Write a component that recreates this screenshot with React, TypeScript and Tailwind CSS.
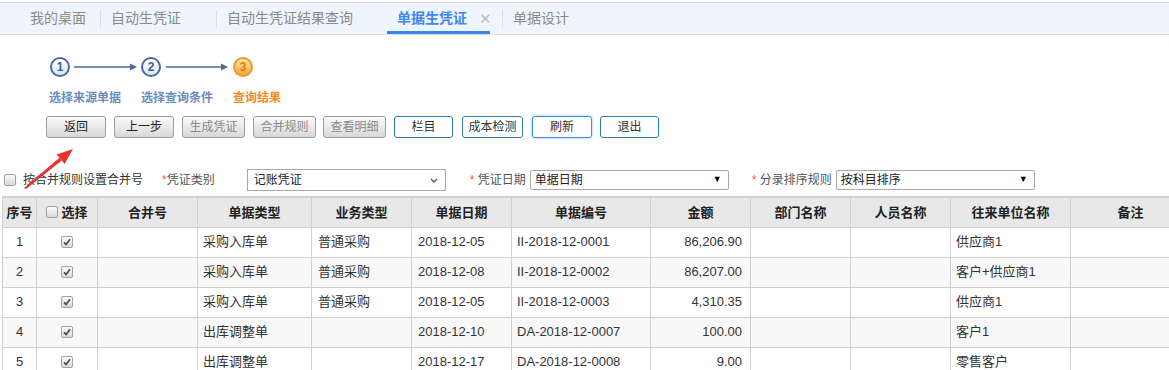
import React from "react";

type Row = {
  no: number;
  billType: string;
  bizType: string;
  date: string;
  code: string;
  amount: string;
  partner: string;
};

const rows: Row[] = [
  { no: 1, billType: "采购入库单", bizType: "普通采购", date: "2018-12-05", code: "II-2018-12-0001", amount: "86,206.90", partner: "供应商1" },
  { no: 2, billType: "采购入库单", bizType: "普通采购", date: "2018-12-08", code: "II-2018-12-0002", amount: "86,207.00", partner: "客户+供应商1" },
  { no: 3, billType: "采购入库单", bizType: "普通采购", date: "2018-12-05", code: "II-2018-12-0003", amount: "4,310.35", partner: "供应商1" },
  { no: 4, billType: "出库调整单", bizType: "", date: "2018-12-10", code: "DA-2018-12-0007", amount: "100.00", partner: "客户1" },
  { no: 5, billType: "出库调整单", bizType: "", date: "2018-12-17", code: "DA-2018-12-0008", amount: "9.00", partner: "零售客户" },
];

const Check = ({ checked }: { checked?: boolean }) => (
  <span className="inline-flex w-[12px] h-[12px] items-center justify-center rounded-[2px] border border-[#a3a3a3] bg-linear-to-b from-[#fafafa] to-[#d9d9d9]">
    {checked && (
      <svg width="8" height="8" viewBox="0 0 8 8">
        <path d="M1 4.3 L3.1 6.4 L7 1.2" fill="none" stroke="#4a4a4a" strokeWidth="1.7" />
      </svg>
    )}
  </span>
);

const StepArrow = ({ w }: { w: number }) => (
  <svg width={w} height="10" viewBox={`0 0 ${w} 10`}>
    <line x1="0" y1="5" x2={w - 6} y2="5" stroke="#4d6a96" strokeWidth="1.5" />
    <path d={`M${w - 7} 1.5 L${w} 5 L${w - 7} 8.5 Z`} fill="#4d6a96" />
  </svg>
);

const GrayBtn = ({ label, className }: { label: string; className: string }) => (
  <button
    className={`h-[22px] rounded-[3px] border border-[#9d9d9d] bg-linear-to-b from-[#fbfbfb] to-[#d8d8d8] text-[12px] ${className}`}
  >
    {label}
  </button>
);

const LineBtn = ({ label, className }: { label: string; className: string }) => (
  <button className={`h-[22px] rounded-[3px] border bg-white text-[12px] text-[#333] ${className}`}>{label}</button>
);

export default function App() {
  return (
    <div className="relative w-[1169px] h-[370px] overflow-hidden whitespace-nowrap bg-white font-['Liberation_Sans','Noto_Sans_CJK_SC',sans-serif]">
      {/* tab bar */}
      <div className="mt-[2px] h-[33px] border-t border-b border-[#dcdcdc] bg-[#eff5fd] flex items-stretch text-[14px] text-[#8a8a8a]">
        <div className="shrink-0 pl-[30px] pr-[14px] flex items-center">我的桌面</div>
        <div className="shrink-0 w-px h-[18px] self-center bg-[#dedede]" />
        <div className="shrink-0 pl-[10px] pr-[35px] flex items-center">自动生凭证</div>
        <div className="shrink-0 w-px h-[18px] self-center bg-[#dedede]" />
        <div className="shrink-0 pl-[10px] flex items-center">自动生凭证结果查询</div>
        <div className="shrink-0 ml-[34px] w-[103px] pl-[10px] flex items-center border-b-[3px] border-[#3a86f0] pt-[3px]">
          <span className="font-bold text-[#3f86f2]">单据生凭证</span>
          <span className="ml-[12px] text-[#bdbdbd] text-[15px] leading-none">✕</span>
        </div>
        <div className="shrink-0 ml-[12px] w-px h-[18px] self-center bg-[#dedede]" />
        <div className="shrink-0 pl-[10px] flex items-center">单据设计</div>
      </div>

      {/* steps */}
      <div className="mt-[22px] pl-[50px] flex items-center">
        <div className="w-[20px] h-[20px] rounded-full border-2 border-[#4a6c9e] bg-linear-to-b from-white to-[#dde7f4] flex items-center justify-center text-[12px] font-bold text-[#3d5f93] leading-none">1</div>
        <div className="ml-[4px] flex"><StepArrow w={63} /></div>
        <div className="ml-[4px] w-[20px] h-[20px] rounded-full border-2 border-[#4a6c9e] bg-linear-to-b from-white to-[#dde7f4] flex items-center justify-center text-[12px] font-bold text-[#3d5f93] leading-none">2</div>
        <div className="ml-[5px] flex"><StepArrow w={62} /></div>
        <div className="ml-[5px] w-[20px] h-[20px] rounded-full border-2 border-[#eb9a2c] bg-linear-to-b from-[#ffe9a6] to-[#f7a632] flex items-center justify-center text-[12px] font-bold text-[#e27a12] leading-none">3</div>
      </div>
      <div className="mt-[14px] pl-[49px] flex gap-[20px] text-[12px] font-bold leading-[14px]">
        <span className="text-[#6a8cc2]">选择来源单据</span>
        <span className="text-[#6a8cc2]">选择查询条件</span>
        <span className="text-[#f08c24]">查询结果</span>
      </div>

      {/* buttons */}
      <div className="mt-[11px] pl-[46px] flex items-center">
        <GrayBtn label="返回" className="w-[60px] text-[#222]" />
        <GrayBtn label="上一步" className="ml-[8px] w-[60px] text-[#222]" />
        <GrayBtn label="生成凭证" className="ml-[8px] w-[63px] text-[#8a8a8a]" />
        <GrayBtn label="合并规则" className="ml-[8px] w-[63px] text-[#8a8a8a]" />
        <GrayBtn label="查看明细" className="ml-[7px] w-[63px] text-[#8a8a8a]" />
        <LineBtn label="栏目" className="ml-[8px] w-[59px] border-[#2b7ea6]" />
        <LineBtn label="成本检测" className="ml-[9px] w-[61px] border-[#2b7ea6]" />
        <LineBtn label="刷新" className="ml-[9px] w-[60px] border-[#3d8fe0] shadow-[0_0_3px_#8dbdf2]" />
        <LineBtn label="退出" className="ml-[8px] w-[59px] border-[#2b7ea6]" />
      </div>

      {/* filters */}
      <div className="mt-[31px] h-[22px] flex items-center text-[12px] text-[#333]">
        <span className="ml-[4px] flex"><Check /></span>
        <span className="ml-[7px]">按合并规则设置合并号</span>
        <span className="ml-[19px] text-[#555]"><span className="text-[#f05a4a]">*</span>凭证类别</span>
        <div className="ml-[32px] w-[199px] h-[22px] border border-[#a9a9a9] flex items-center justify-between pl-[6px] pr-[7px] text-[#222]">
          <span>记账凭证</span>
          <svg width="8" height="5" viewBox="0 0 8 5">
            <path d="M1 1 L4 4 L7 1" fill="none" stroke="#555" strokeWidth="1.3" />
          </svg>
        </div>
        <span className="ml-[24px] text-[#555]"><span className="text-[#f05a4a]">*</span> 凭证日期</span>
        <div className="ml-[4px] w-[199px] h-[20px] border border-[#a9a9a9] rounded-[2px] flex items-center justify-between pl-[4px] pr-[6px] text-[#222]">
          <span>单据日期</span>
          <span className="text-[9px] text-black">▼</span>
        </div>
        <span className="ml-[23px] text-[#555]"><span className="text-[#f05a4a]">*</span> 分录排序规则</span>
        <div className="ml-[4px] w-[199px] h-[20px] border border-[#a9a9a9] rounded-[2px] flex items-center justify-between pl-[4px] pr-[6px] text-[#222]">
          <span>按科目排序</span>
          <span className="text-[9px] text-black">▼</span>
        </div>
      </div>

      {/* table */}
      <table className="mt-[5px] ml-[2px] w-[1188px] table-fixed border-collapse border-t-2 border-[#d0d0d0] text-[13px] text-[#333]">
        <colgroup>
          <col className="w-[34px]" />
          <col className="w-[61px]" />
          <col className="w-[100px]" />
          <col className="w-[114px]" />
          <col className="w-[100px]" />
          <col className="w-[100px]" />
          <col className="w-[139px]" />
          <col className="w-[100px]" />
          <col className="w-[100px]" />
          <col className="w-[100px]" />
          <col className="w-[120px]" />
          <col className="w-[120px]" />
        </colgroup>
        <thead>
          <tr className="h-[30px] bg-[#e8e8e8] text-[#222]">
            <th className="border border-[#d0d0d0] font-bold">序号</th>
            <th className="border border-[#d0d0d0] font-bold">
              <span className="flex items-center justify-center gap-[3px]">
                <Check />
                选择
              </span>
            </th>
            {["合并号", "单据类型", "业务类型", "单据日期", "单据编号", "金额", "部门名称", "人员名称", "往来单位名称", "备注"].map((h) => (
              <th key={h} className="border border-[#d0d0d0] font-bold">{h}</th>
            ))}
          </tr>
        </thead>
        <tbody>
          {rows.map((r, i) => (
            <tr key={r.no} className={`h-[30px] ${i % 2 === 1 ? "bg-[#f8f8f8]" : "bg-white"}`}>
              <td className="border border-[#d0d0d0] text-center">{r.no}</td>
              <td className="border border-[#d0d0d0] text-center">
                <span className="flex justify-center"><Check checked /></span>
              </td>
              <td className="border border-[#d0d0d0]" />
              <td className="border border-[#d0d0d0] pl-[5px]">{r.billType}</td>
              <td className="border border-[#d0d0d0] pl-[6px]">{r.bizType}</td>
              <td className="border border-[#d0d0d0] pl-[6px]">{r.date}</td>
              <td className="border border-[#d0d0d0] pl-[5px]">{r.code}</td>
              <td className="border border-[#d0d0d0] text-right pr-[8px]">{r.amount}</td>
              <td className="border border-[#d0d0d0]" />
              <td className="border border-[#d0d0d0]" />
              <td className="border border-[#d0d0d0] pl-[5px]">{r.partner}</td>
              <td className="border border-[#d0d0d0]" />
            </tr>
          ))}
        </tbody>
      </table>

      {/* annotation arrow */}
      <svg className="absolute left-0 top-0 pointer-events-none" width="120" height="200" viewBox="0 0 120 200">
        <polygon points="24,188 26,189 61.7,160.5 59.5,157.7" fill="#e8322b" />
        <polygon points="73,149 64.6,164 60.6,159.1 56.6,154.4" fill="#e8322b" />
      </svg>
    </div>
  );
}
